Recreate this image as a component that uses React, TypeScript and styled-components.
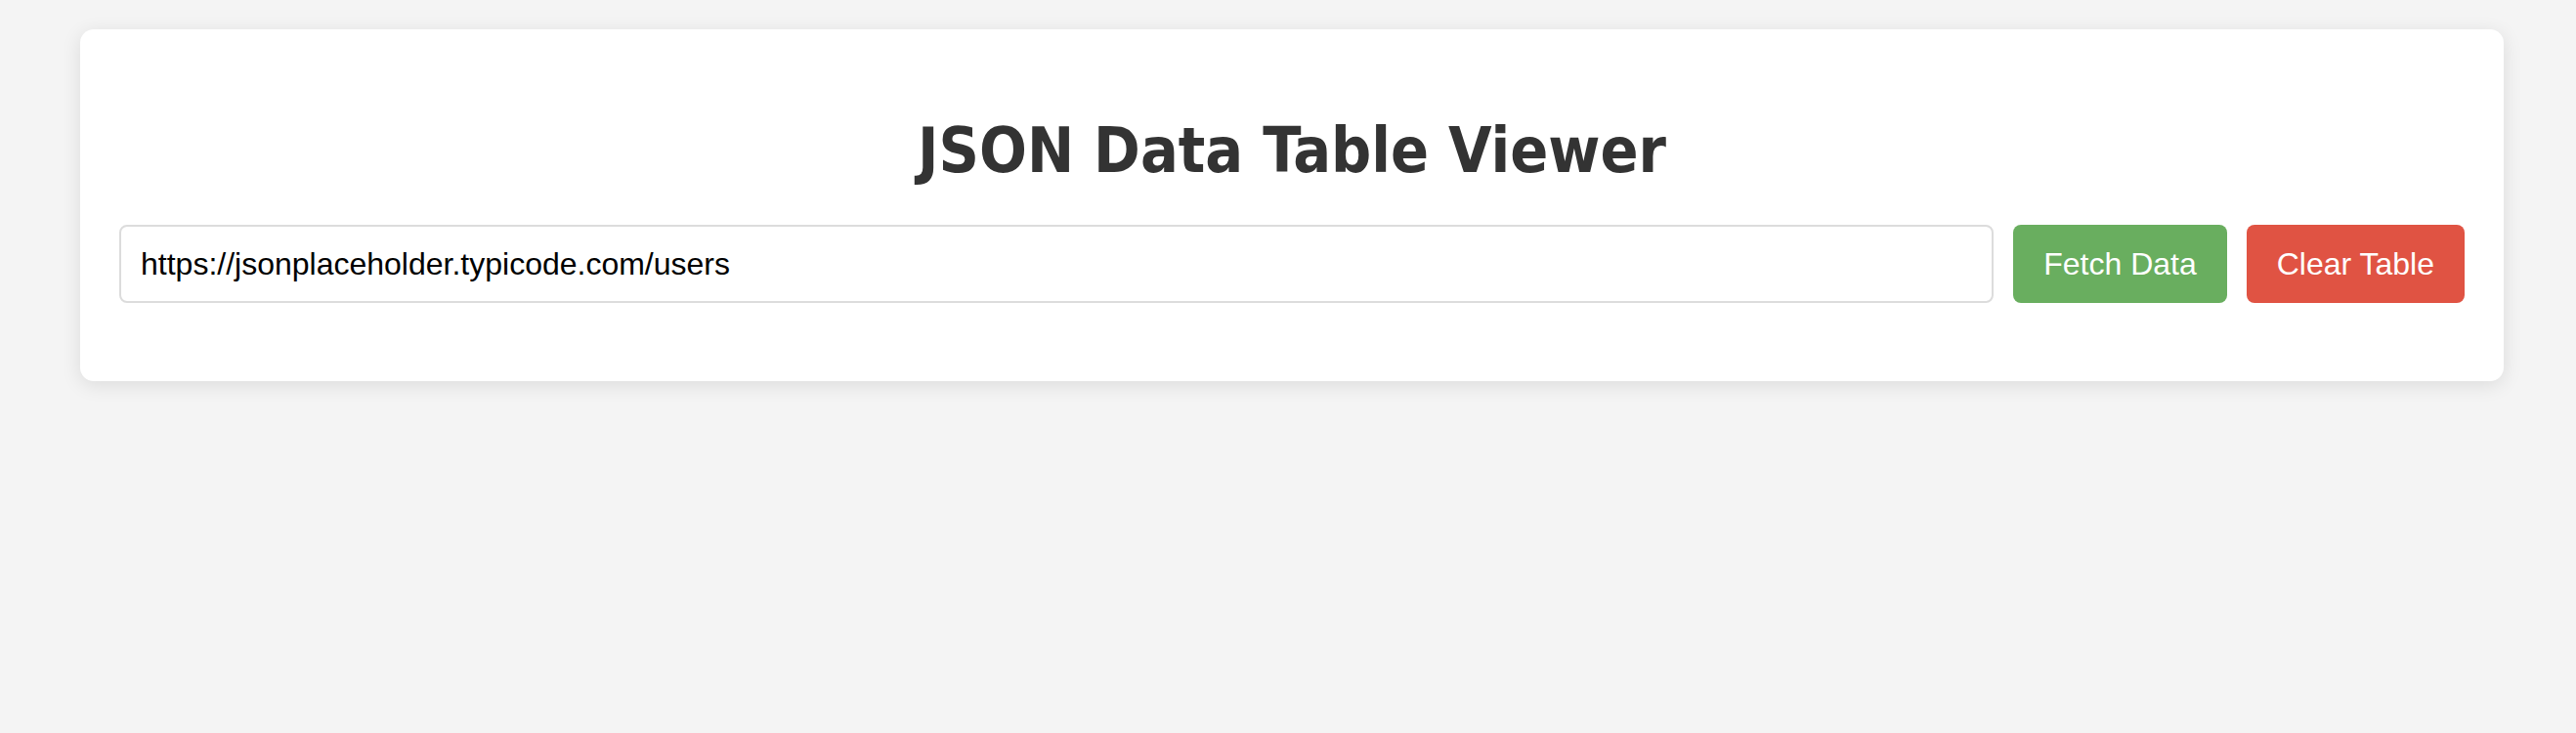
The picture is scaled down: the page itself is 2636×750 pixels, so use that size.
import React, { useState } from 'react';
import styled, { createGlobalStyle } from 'styled-components';

const GlobalStyle = createGlobalStyle`
  html, body {
    margin: 0;
    padding: 0;
    background-color: #f4f4f4;
  }
  * {
    box-sizing: border-box;
  }
`;

const Page = styled.div`
  min-height: 750px;
  padding: 30px 74px 0 82px;
  font-family: 'Liberation Sans', Arial, sans-serif;
`;

const Card = styled.div`
  background-color: #ffffff;
  border-radius: 14px;
  box-shadow: 0 4px 20px rgba(0, 0, 0, 0.1);
  padding: 40px 40px 80px;
`;

const Title = styled.h1`
  font-family: 'DejaVu Sans Condensed', 'DejaVu Sans', Tahoma, sans-serif;
  font-stretch: condensed;
  font-size: 64px;
  font-weight: 700;
  color: #333333;
  text-align: center;
  margin: 47px 0 39px;
`;

const Controls = styled.div`
  display: flex;
  align-items: center;
  gap: 20px;
`;

const UrlInput = styled.input`
  flex: 1;
  height: 80px;
  padding: 0 20px;
  border: 2px solid #dcdcdc;
  border-radius: 8px;
  font-family: 'Liberation Sans', Arial, sans-serif;
  font-size: 32px;
  color: #000000;
  outline: none;
`;

const ActionButton = styled.button<{ variant: 'fetch' | 'clear' }>`
  height: 80px;
  padding: 0 31px;
  border: none;
  border-radius: 8px;
  font-family: 'Liberation Sans', Arial, sans-serif;
  font-size: 32px;
  color: #ffffff;
  cursor: pointer;
  background-color: ${({ variant }) => (variant === 'fetch' ? '#69ae5f' : '#e05343')};
`;

const App: React.FC = () => {
  const [url, setUrl] = useState('https://jsonplaceholder.typicode.com/users');

  return (
    <>
      <GlobalStyle />
      <Page>
        <Card>
          <Title>JSON Data Table Viewer</Title>
          <Controls>
            <UrlInput value={url} onChange={(e) => setUrl(e.target.value)} />
            <ActionButton variant="fetch">Fetch Data</ActionButton>
            <ActionButton variant="clear">Clear Table</ActionButton>
          </Controls>
        </Card>
      </Page>
    </>
  );
};

export default App;
